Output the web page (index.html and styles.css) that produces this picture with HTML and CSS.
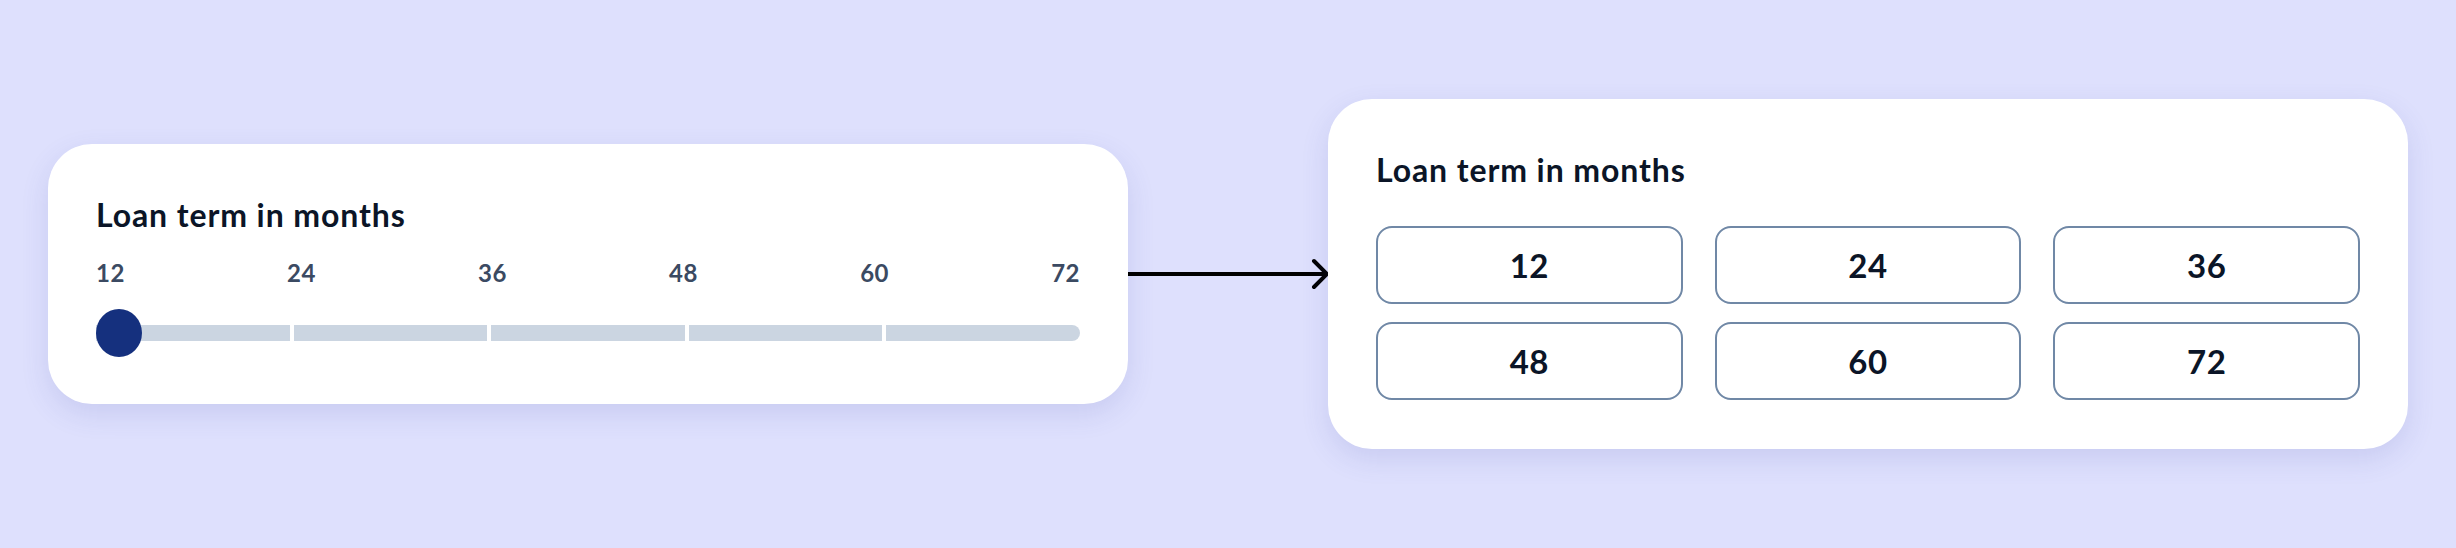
FILE: index.html
```html
<!DOCTYPE html>
<html lang="en">
<head>
  <meta charset="UTF-8">
  <meta name="viewport" content="width=device-width, initial-scale=1.0">
  <title>Loan term picker</title>
  <link rel="stylesheet" href="styles.css">
</head>
<body>
  <div class="compare">
    <!-- Before: slider -->
    <div class="card">
      <h2>Loan term in months</h2>
      <div class="ticks">
        <span>12</span>
        <span>24</span>
        <span>36</span>
        <span>48</span>
        <span>60</span>
        <span>72</span>
      </div>
      <div class="slider">
        <div class="track">
          <span></span><span></span><span></span><span></span><span></span>
        </div>
        <div class="thumb"></div>
      </div>
    </div>

    <div class="arrow">
      <svg viewBox="0 0 200 32" width="200" height="32" fill="none" xmlns="http://www.w3.org/2000/svg">
        <path d="M0 16H198" stroke="#000" stroke-width="4"/>
        <path d="M186 3L199 16L186 29" stroke="#000" stroke-width="4" stroke-linecap="round" stroke-linejoin="round"/>
      </svg>
    </div>

    <!-- After: option buttons -->
    <div class="card card-options">
      <h2>Loan term in months</h2>
      <div class="options">
        <button>12</button>
        <button>24</button>
        <button>36</button>
        <button>48</button>
        <button>60</button>
        <button>72</button>
      </div>
    </div>
  </div>
</body>
</html>
```

FILE: styles.css
```css
* {
  margin: 0;
  padding: 0;
  box-sizing: border-box;
}

body {
  font-family: Lato, 'Noto Sans', sans-serif;
  background: #DEE0FD;
  color: #0B1527;
  min-height: 100vh;
  display: flex;
  align-items: center;
}

.compare {
  display: flex;
  align-items: center;
  width: 100%;
  padding: 0 48px;
}

.card {
  flex: 1;
  background: #FFFFFF;
  border-radius: 44px;
  padding: 52px 48px 47px;
  box-shadow: 0 10px 28px rgba(70, 80, 170, 0.14);
}

.card-options {
  padding-bottom: 49px;
}

.card h2 {
  font-size: 32px;
  font-weight: 700;
  line-height: 1.2;
  letter-spacing: 0.9px;
  color: #0B1527;
}

.ticks {
  display: flex;
  justify-content: space-between;
  margin-top: 24px;
  font-size: 24px;
  font-weight: 700;
  line-height: 1.2;
  letter-spacing: 0.5px;
  color: #3B4A62;
}

.slider {
  position: relative;
  height: 48px;
  margin-top: 21px;
  display: flex;
  align-items: center;
}

.track {
  flex: 1;
  display: flex;
  gap: 4px;
}

.track span {
  flex: 1;
  height: 16px;
  background: #CBD5E1;
}

.track span:last-child {
  border-radius: 0 8px 8px 0;
}

.thumb {
  position: absolute;
  left: 0;
  top: 0;
  width: 46px;
  height: 48px;
  border-radius: 50%;
  background: #15307E;
}

.arrow {
  width: 200px;
  display: flex;
}

.options {
  display: grid;
  grid-template-columns: repeat(3, 1fr);
  gap: 18px 32px;
  margin-top: 36px;
}

.options button {
  height: 78px;
  background: #FFFFFF;
  border: 2px solid #7088A6;
  border-radius: 16px;
  font-family: Lato, 'Noto Sans', sans-serif;
  font-size: 33px;
  font-weight: 700;
  letter-spacing: 0.5px;
  color: #0B1527;
  cursor: pointer;
}
```
